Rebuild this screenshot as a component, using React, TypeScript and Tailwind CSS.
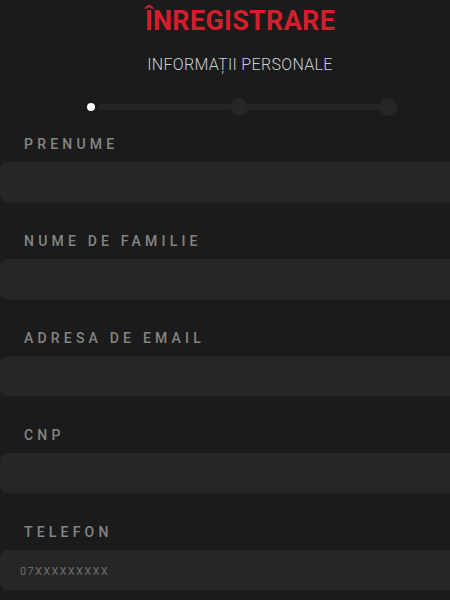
import React from "react";

const fields = [
  { label: "PRENUME", placeholder: "" },
  { label: "NUME DE FAMILIE", placeholder: "" },
  { label: "ADRESA DE EMAIL", placeholder: "" },
  { label: "CNP", placeholder: "" },
  { label: "TELEFON", placeholder: "07XXXXXXXXX" },
];

export default function App() {
  return (
    <div
      className="w-[450px] h-[600px] overflow-hidden bg-[#1b1b1b]"
      style={{ fontFamily: "Roboto, 'Liberation Sans', sans-serif" }}
    >
      <div className="w-[480px] flex flex-col">
        <h1 className="mt-[4px] text-center text-[27px] leading-[34px] font-bold text-[#d31f2d] tracking-[0.01em]">
          ÎNREGISTRARE
        </h1>
        <p className="mt-[15px] text-center text-[16px] leading-[24px] font-light text-[#cfcfcf] tracking-[0.02em]">
          INFORMAȚII PERSONALE
        </p>
        <div className="mt-[22px] mx-[83px] relative h-[16px] flex items-center">
          <div className="absolute left-[8px] right-[8px] h-[6px] bg-[#242424]" />
          <div className="relative w-full flex justify-between items-center">
            <div className="w-[16px] h-[16px] rounded-full bg-[#1b1b1b] flex items-center justify-center">
              <div className="w-[8px] h-[8px] rounded-full bg-white" />
            </div>
            <div className="w-[18px] h-[18px] rounded-full bg-[#262626]" />
            <div className="w-[18px] h-[18px] rounded-full bg-[#262626]" />
          </div>
        </div>
        <div className="mt-[19px] flex flex-col">
          {fields.map((f) => (
            <div key={f.label} className="flex flex-col mb-[29px]">
              <label className="pl-[24px] text-[14px] leading-[20px] font-medium tracking-[0.3em] text-[#858585]">
                {f.label}
              </label>
              <input
                className="mt-[8px] h-[40px] w-full rounded-lg bg-[#262626] pl-[20px] pt-[3px] text-[11px] tracking-[0.12em] text-[#bbbbbb] placeholder:text-[#6e6e6e] outline-none shadow-[0_1px_0_#202020]"
                placeholder={f.placeholder}
                style={{ fontFamily: "Roboto, 'Liberation Sans', sans-serif" }}
              />
            </div>
          ))}
        </div>
      </div>
    </div>
  );
}
